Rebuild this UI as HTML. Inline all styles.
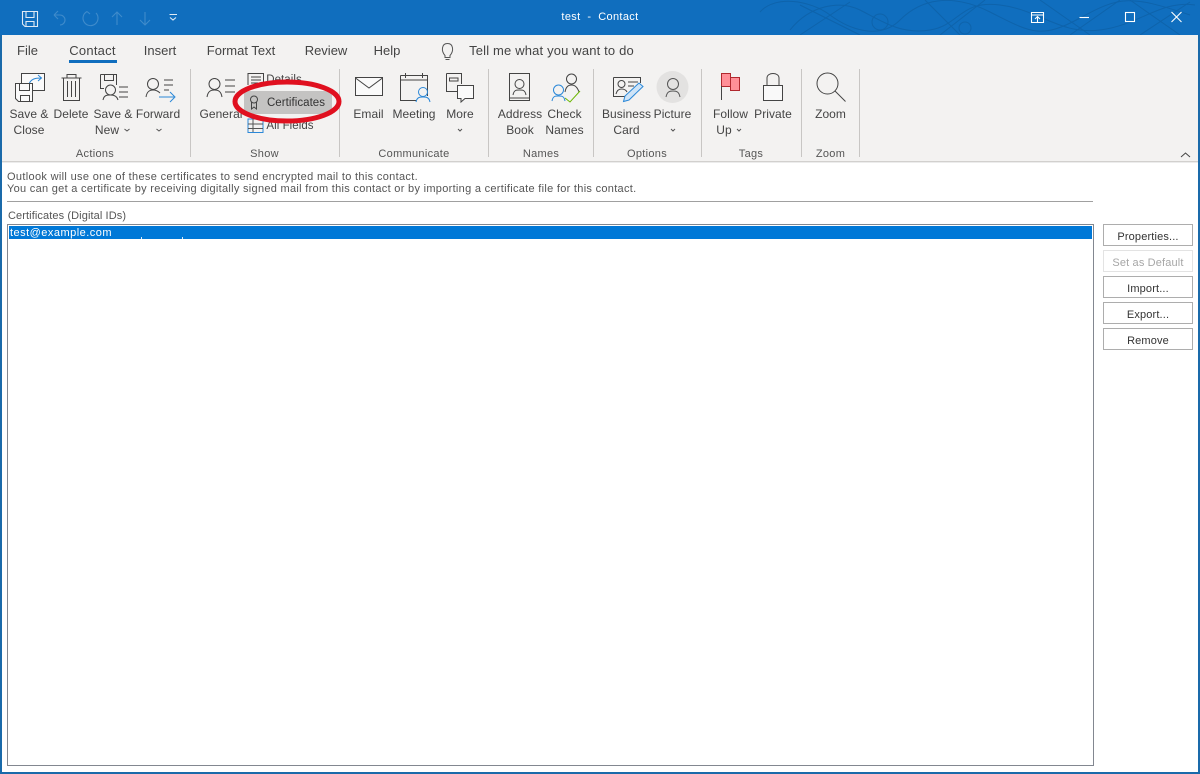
<!DOCTYPE html>
<html><head><meta charset="utf-8"><style>
html,body{margin:0;padding:0;background:#fff}
#w{position:relative;width:1200px;height:774px;overflow:hidden;background:#fff;font-family:"Liberation Sans",sans-serif;color:#444}
.a{position:absolute}
.t{position:absolute;white-space:nowrap;transform:translateX(-50%);font-size:12px;line-height:16px;color:#444;letter-spacing:.05px}
.tab{position:absolute;white-space:nowrap;font-size:13px;line-height:16px;color:#444;letter-spacing:0;transform:translateX(-50%)}
.g{position:absolute;white-space:nowrap;transform:translateX(-50%);font-size:11px;line-height:14px;color:#555;letter-spacing:.3px}
.s{position:absolute;top:69px;width:1px;height:88px;background:#c8c6c4}
.b{position:absolute;left:1103px;width:88px;height:20px;border:1px solid #adadad;background:#fff;text-align:center;font-size:11px;line-height:25px;color:#333;letter-spacing:.15px}
.l{position:absolute;white-space:nowrap;font-size:11px;line-height:13px;color:#555;letter-spacing:.33px}
svg{position:absolute;overflow:visible}
</style></head><body><div id="w">
<div class="a" style="left:0;top:0;width:1200px;height:35px;background:#106ebe"></div>
<svg style="left:0;top:0" width="1200" height="35" viewBox="0 0 1200 35" fill="none" stroke="#0e63ab" stroke-width="1">
<path d="M760 12C775 -5 810 0 830 15S880 40 900 20S950 -8 990 12S1040 40 1080 18S1130 -5 1190 15"/>
<path d="M790 30C810 5 840 0 860 10S900 35 930 30S960 0 1000 5S1060 35 1100 30S1160 0 1195 5"/>
<path d="M800 5L860 35M850 2L800 35M925 0L960 35M985 0L940 35M1040 0L1090 35M1120 0L1070 35M1130 0L1180 35M1190 2L1140 35"/>
<circle cx="880" cy="22" r="8"/><circle cx="965" cy="28" r="6"/>
</svg>
<svg style="left:0;top:0" width="200" height="35" viewBox="0 0 200 35" fill="none" stroke="#fff" stroke-width="1.100">
<path d="M22.500 11.500H37.500V26.500H25L22.500 24Z" stroke="#dfeaf5"/><path d="M26 11.500V17.500H34V11.500M26 26.500V21.500H34V26.500" stroke="#dfeaf5"/>
<g stroke="#3f8bcb"><path d="M54 15L58 11M54 15L58 19M54 15H60A5 5 0 0 1 60 25"/><path d="M96 13A7.500 7.500 0 1 1 87 11.500L84 14M87 11.500L90 14" /><path d="M117 25V12M112 17L117 12L122 17"/><path d="M145 12V25M140 20L145 25L150 20"/></g>
<path d="M169.500 14.500H177M170 17.500L173 20L176 17.500" stroke="#dfeaf5"/>
</svg>
<div class="a" style="left:0;width:1200px;top:10px;text-align:center;font-size:11px;line-height:15px;color:#fff;letter-spacing:.35px;white-space:pre">test  -  Contact</div>
<svg style="left:1000px;top:0" width="200" height="35" fill="none" stroke="#fff" stroke-width="1.100">
<path d="M31.500 12.500H43.500V22.500H31.500ZM31.500 15H43.500M37.500 22.500V17M35 19L37.500 16.500L40 19"/>
<path d="M79.500 17.500H89"/><rect x="125.500" y="12.500" width="9" height="9" /><path d="M171.500 12L181.500 22M181.500 12L171.500 22"/>
</svg>
<div class="a" style="left:2px;top:35px;width:1196px;height:126px;background:#f3f2f1"></div>
<div class="a" style="left:2px;top:161px;width:1196px;height:1px;background:#d2d0ce"></div>
<div class="a" style="left:2px;top:162px;width:1196px;height:1px;background:#ececec"></div>
<div class="a" style="left:0;top:35px;width:2px;height:739px;background:#1a6aaa"></div>
<div class="a" style="left:1198px;top:35px;width:2px;height:739px;background:#1a6aaa"></div>
<div class="a" style="left:0;top:772px;width:1200px;height:2px;background:#1a6aaa"></div>

<div class="tab" style="left:27.500px;top:43px">File</div>
<div class="tab" style="left:92.500px;top:43px;letter-spacing:.25px">Contact</div>
<div class="a" style="left:69px;top:60px;width:48px;height:3px;background:#106ebe"></div>
<div class="tab" style="left:160px;top:43px">Insert</div>
<div class="tab" style="left:241px;top:43px">Format Text</div>
<div class="tab" style="left:326px;top:43px">Review</div>
<div class="tab" style="left:387px;top:43px">Help</div>
<div class="tab" style="left:551.500px;top:43px;letter-spacing:.16px">Tell me what you want to do</div>
<svg style="left:0;top:0" width="1200" height="165" fill="none" stroke="#444" stroke-width="1">
<path d="M445 55.500C441 51 441.500 43.500 447.500 43.500S454 51 450 55.500V57.500H445ZM445.500 59.500H449.500" stroke="#555"/>
<!-- save close -->
<path d="M21.500 83V73.500H44.500V90.500H33" fill="#fafafa"/><path d="M29 84C31 79 35 78 41 78M38 75L41.500 78L38 81" stroke="#2b88d8"/>
<path d="M15.500 83.500H32.500V101.500H18.500L15.500 98.500Z" fill="#fafafa"/><path d="M19.500 83.500V90.500H29.500V83.500M20.500 101.500V95.500H29.500V101.500"/>
<!-- delete -->
<path d="M61.500 78H81.500M67 78V74.500H76V78M63.500 78V100.500H79.500V78M67.500 81V97M71.500 81V97M75.500 81V97"/>
<!-- save new -->
<path d="M100.500 74.500H116.500V85M100.500 74.500V88.500H104M104.500 74.500V80.500H113.500V74.500"/><circle cx="110.500" cy="90" r="5"/><path d="M103 100C104 95 107 95 110.500 95S117 96 118 100M119 87H128M119 92H128M119 97H128"/>
<!-- forward -->
<circle cx="153" cy="84" r="5.500"/><path d="M146 97C147 91 150 90 153 90S158 91 160 93M164 80H173M164 85H173M164 90H169"/><path d="M159 97H174M170 92L175 97L170 102" stroke="#2b88d8"/>
<!-- general -->
<circle cx="214.500" cy="84" r="5.500"/><path d="M207 97C208 91 211 90 214.500 90S221 91 222 97M225 80H235M225 86H235M225 92H235"/>
<!-- details / fields -->
<path d="M248 85V73.500H263.500V82M251 77H261M251 80H261M251 83H258"/>
<rect x="248" y="119" width="15" height="13.500" stroke="#2b88d8"/><path d="M248 124H263M248 128.500H263M253 119V132" stroke="#555"/>
<!-- email -->
<rect x="355.500" y="77.500" width="27" height="18" fill="#fafafa"/><path d="M355.500 78L369 88L382.500 78"/>
<!-- meeting -->
<path d="M400.500 75.500H427.500V96M400.500 75.500V100.500H416M405.500 73V78M422.500 73V78M400.500 80H427.500"/>
<circle cx="423" cy="92" r="4.500" stroke="#2b88d8"/><path d="M416 102C417 97 420 97 423 97S429 97 430 102" stroke="#2b88d8"/>
<!-- more -->
<path d="M446.500 73.500H461.500V84M446.500 73.500V91.500H457M449.500 78H458V81H449.500Z"/><path d="M457.500 85.500H473.500V98.500H465L461 102V98.500H457.500Z" fill="#fafafa"/>
<!-- address book -->
<path d="M509.500 73.500H529.500V100.500H509.500ZM509.500 98H529.500"/><circle cx="519.500" cy="84" r="4.500"/><path d="M513 95C514 90 516 90 519.500 90S525 90 526 95"/>
<!-- check names -->
<circle cx="571.500" cy="79" r="5"/><path d="M565 92C566 86 569 85 571.500 85S577 86 579 92"/>
<circle cx="558.500" cy="90" r="5" stroke="#2b88d8"/><path d="M552 101C553 96 555 96 558.500 96S564 96 565 101" stroke="#2b88d8"/>
<path d="M565 98L570 102L580 91" stroke="#6bb700"/>
<!-- biz card -->
<path d="M613.500 77.500H640.500V83M613.500 77.500V96.500H627"/><circle cx="621.500" cy="84" r="3.500"/><path d="M616 94C617 90 619 89 621.500 89S626 90 627 92M628 82H638M628 86H634"/>
<path d="M623.500 101.500L625 96L639 83L643 86.500L629 100Z" fill="#cfe4f7" stroke="#2b88d8"/>
<!-- picture -->
<circle cx="672.500" cy="87" r="16" fill="#e3e2e1" stroke="none"/><circle cx="673" cy="84" r="5.500" stroke="#555"/><path d="M666 97C667 92 669 91 673 91S679 92 680 97" stroke="#555"/>
<!-- flag -->
<path d="M721.500 100V73.500H730.500V77.500H739.500V90.500H730.500V86.500H721.500" fill="#ff8f97" stroke="#b0282e"/><path d="M721.500 100V86" stroke="#444"/><path d="M730.500 77.500V86.500" stroke="#b0282e"/>
<!-- lock -->
<rect x="763.500" y="85.500" width="19" height="15" fill="#f9f9f9"/><path d="M767 85V78C767 72 779 72 779 78V85"/>
<!-- zoom -->
<circle cx="827.500" cy="83.500" r="10.500"/><path d="M835 91L845.500 101.500"/>
<!-- collapse -->
<path d="M1181 157L1185.500 153L1190 157" stroke="#444"/>
<!-- chevrons -->
<g stroke="#555"><path d="M124.500 129L127 131L129.500 129M156.500 129L159 131L161.500 129M458 129L460 131L462 129M671 129L673 131L675 129M737 129L739 131L741 129"/></g>
</svg>
<div class="s" style="left:190px"></div><div class="s" style="left:339px"></div><div class="s" style="left:488px"></div><div class="s" style="left:593px"></div><div class="s" style="left:701px"></div><div class="s" style="left:801px"></div><div class="s" style="left:859px"></div>

<div class="t" style="left:29px;top:106px">Save &amp;</div><div class="t" style="left:29px;top:122px">Close</div>
<div class="t" style="left:71px;top:106px">Delete</div>
<div class="t" style="left:113px;top:106px">Save &amp;</div><div class="t" style="left:107px;top:122px">New</div>
<div class="t" style="left:158px;top:106px">Forward</div>
<div class="t" style="left:221px;top:106px">General</div>
<div class="t" style="left:284px;top:72px;font-size:11.500px">Details</div>
<div class="t" style="left:290px;top:118px;font-size:11.500px">All Fields</div>
<div class="t" style="left:368.500px;top:106px">Email</div>
<div class="t" style="left:414px;top:106px">Meeting</div>
<div class="t" style="left:460px;top:106px">More</div>
<div class="t" style="left:520px;top:106px">Address</div><div class="t" style="left:520px;top:122px">Book</div>
<div class="t" style="left:564.500px;top:106px">Check</div><div class="t" style="left:564.500px;top:122px">Names</div>
<div class="t" style="left:626.500px;top:106px">Business</div><div class="t" style="left:626.500px;top:122px">Card</div>
<div class="t" style="left:672.500px;top:106px">Picture</div>
<div class="t" style="left:730.500px;top:106px">Follow</div><div class="t" style="left:724px;top:122px">Up</div>
<div class="t" style="left:773px;top:106px">Private</div>
<div class="t" style="left:830.500px;top:106px">Zoom</div>
<div class="g" style="left:95px;top:147px">Actions</div>
<div class="g" style="left:264.500px;top:147px">Show</div>
<div class="g" style="left:414px;top:147px">Communicate</div>
<div class="g" style="left:541px;top:147px">Names</div>
<div class="g" style="left:647px;top:147px">Options</div>
<div class="g" style="left:751px;top:147px">Tags</div>
<div class="g" style="left:830.500px;top:147px">Zoom</div>

<!-- highlight -->
<div class="a" style="left:244px;top:91px;width:88px;height:23px;background:#c4c3c2"></div>
<svg style="left:0;top:0" width="400" height="165" fill="none">
<path d="M254 96A3.500 3.500 0 1 1 254 103A3.500 3.500 0 1 1 254 96ZM251.500 102V109L254 107L256.500 109V102" stroke="#444"/>
<ellipse cx="287" cy="101.500" rx="52" ry="19.500" stroke="#e0101f" stroke-width="5"/>
</svg>
<div class="t" style="left:296px;top:95px;font-size:11.500px;color:#333">Certificates</div>

<div class="l" style="left:7px;top:171px">Outlook will use one of these certificates to send encrypted mail to this contact.</div>
<div class="l" style="left:7px;top:183px;letter-spacing:.295px">You can get a certificate by receiving digitally signed mail from this contact or by importing a certificate file for this contact.</div>
<div class="a" style="left:7px;top:201px;width:1086px;height:1px;background:#a0a0a0"></div>
<div class="l" style="left:8px;top:210px;letter-spacing:.1px">Certificates (Digital IDs)</div>
<div class="a" style="left:7px;top:224px;width:1085px;height:540px;border:1px solid #828790"></div>
<div class="a" style="left:9px;top:226px;width:1083px;height:13px;background:#0078d7"></div>
<div class="l" style="left:10px;top:226px;color:#fff;letter-spacing:.48px;line-height:14px">test@example.com</div>
<div class="a" style="left:141px;top:237px;width:1px;height:2px;background:#d8e8f6"></div>
<div class="a" style="left:182px;top:237px;width:1px;height:2px;background:#d8e8f6"></div>
<div class="b" style="top:224px">Properties...</div>
<div class="b" style="top:250px;color:#a6a6a6;border-color:#e3e3e3">Set as Default</div>
<div class="b" style="top:276px">Import...</div>
<div class="b" style="top:302px">Export...</div>
<div class="b" style="top:328px">Remove</div>
</div></body></html>
